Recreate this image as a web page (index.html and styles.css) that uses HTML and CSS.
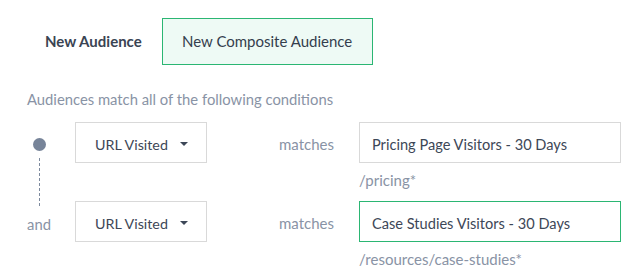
FILE: index.html
```html
<!DOCTYPE html>
<html>
<head>
<meta charset="utf-8">
<link rel="stylesheet" href="styles.css">
</head>
<body>
<div class="page">
  <div class="tabs">
    <div class="tab">New Audience</div>
    <div class="tab tab-active">New Composite Audience</div>
  </div>
  <p class="hint-title">Audiences match all of the following conditions</p>
  <div class="conditions">
    <div class="rail">
      <span class="dot"></span>
      <span class="connector"></span>
      <span class="and">and</span>
    </div>
    <div class="rows">
      <div class="row">
        <div class="select">URL Visited <span class="caret"></span></div>
        <div class="op">matches</div>
        <div class="field">
          <div class="input">Pricing Page Visitors - 30 Days</div>
          <div class="url">/pricing*</div>
        </div>
      </div>
      <div class="row">
        <div class="select">URL Visited <span class="caret"></span></div>
        <div class="op">matches</div>
        <div class="field">
          <div class="input input-focus">Case Studies Visitors - 30 Days</div>
          <div class="url">/resources/case-studies*</div>
        </div>
      </div>
    </div>
  </div>
</div>
</body>
</html>
```
FILE: styles.css
```css
html, body {
  margin: 0;
  padding: 0;
  background: #ffffff;
}
body {
  font-family: Lato, "Liberation Sans", sans-serif;
  color: #3d4757;
  font-size: 14.5px;
}
.page {
  padding: 18px 0 0 27px;
}
.tabs {
  display: flex;
  align-items: stretch;
  height: 47px;
}
.tab {
  display: flex;
  align-items: center;
  padding: 0 0 1px 18px;
  width: 135px;
  box-sizing: border-box;
  font-size: 15px;
  font-weight: 700;
  color: #3a4453;
}
.tab-active {
  width: 211px;
  padding: 0 0 1px 19px;
  font-weight: 400;
  border: 1px solid #2bb673;
  background: #eefaf5;
  color: #343e4d;
}
.hint-title {
  margin: 25px 0 0 0;
  line-height: 18px;
  font-size: 14.8px;
  color: #8993a5;
}
.conditions {
  display: flex;
  margin-top: 14px;
}
.rail {
  width: 24px;
  margin-right: 24px;
  display: flex;
  flex-direction: column;
  align-items: center;
}
.dot {
  width: 13px;
  height: 13px;
  border-radius: 50%;
  background: #778499;
  margin-top: 16px;
}
.connector {
  width: 1px;
  height: 49px;
  margin-top: 7px;
  background: repeating-linear-gradient(to bottom, #7d8a9e 0 3px, transparent 3px 5px);
}
.and {
  margin-top: 9px;
  line-height: 17px;
  color: #8993a5;
  font-size: 14.8px;
}
.rows {
  display: flex;
  flex-direction: column;
}
.row {
  display: flex;
  align-items: flex-start;
  height: 79px;
}
.select {
  width: 132px;
  height: 41px;
  box-sizing: border-box;
  border: 1px solid #d9d9d9;
  display: flex;
  align-items: center;
  padding: 3px 0 0 19px;
  font-size: 14.3px;
  color: #3d4757;
}
.caret {
  width: 0;
  height: 0;
  border-left: 4px solid transparent;
  border-right: 4px solid transparent;
  border-top: 4px solid #3d4757;
  margin: -1px 0 0 12px;
}
.op {
  width: 152px;
  box-sizing: border-box;
  padding: 2px 0 0 72px;
  line-height: 41px;
  color: #8993a5;
  font-size: 15px;
}
.field {
  display: flex;
  flex-direction: column;
}
.input {
  width: 262px;
  height: 41px;
  box-sizing: border-box;
  border: 1px solid #d9d9d9;
  display: flex;
  align-items: center;
  padding: 3px 0 0 12px;
  font-size: 14.6px;
  color: #3d4757;
}
.input-focus {
  border-color: #2bb673;
}
.url {
  margin-top: 8px;
  line-height: 18px;
  color: #8993a5;
  font-size: 15px;
}
```
